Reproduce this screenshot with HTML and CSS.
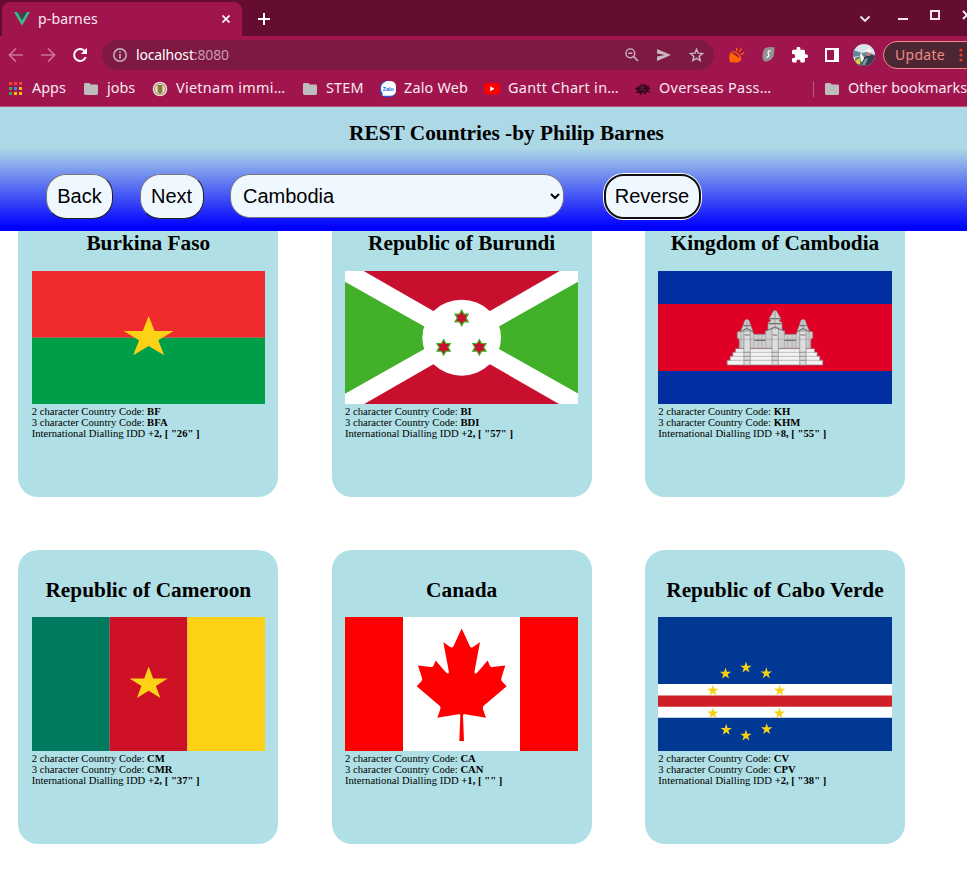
FILE: index.html
```html
<!DOCTYPE html>
<html lang="en">
<head>
<meta charset="utf-8">
<title>p-barnes</title>
<link rel="stylesheet" href="styles.css">
</head>
<body>
<svg class="defs" width="0" height="0" aria-hidden="true">
  <defs>
    <symbol id="folder" viewBox="0 0 14 12"><path fill="#bdbdbd" d="M1.4 0H5.3L6.8 1.5H12.6Q14 1.5 14 2.9V10.6Q14 12 12.6 12H1.4Q0 12 0 10.6V1.4Q0 0 1.4 0Z"/></symbol>
    <polygon id="star" points="0,-1 .2245,-.309 .951,-.309 .363,.118 .588,.809 0,.382 -.588,.809 -.363,.118 -.951,-.309 -.2245,-.309"/>
    <polygon id="hexstar" points="0,-1 .289,-.5 .866,-.5 .577,0 .866,.5 .289,.5 0,1 -.289,.5 -.866,.5 -.577,0 -.866,-.5 -.289,-.5"/>
  </defs>
</svg>

<div class="browser">
  <div class="tabstrip">
    <div class="tab">
      <svg width="16" height="14" viewBox="0 0 16 14"><path fill="#41b883" d="M0 0H3.2L8 8.3 12.8 0H16L8 13.8Z"/><path fill="#35495e" d="M3.2 0H6.1L8 3.3 9.9 0H12.8L8 8.3Z"/></svg>
      <span class="tab-title">p-barnes</span>
      <svg class="tab-close" width="8" height="8" viewBox="0 0 8 8"><path d="M.5 .5 7.5 7.5M7.500 .5 .5 7.500" stroke="#fff" stroke-width="1.600"/></svg>
    </div>
    <svg class="newtab" width="12" height="12" viewBox="0 0 12 12"><path d="M6 0V12M0 6H12" stroke="#fff" stroke-width="2"/></svg>
    <div class="window-controls">
      <svg width="12" height="8" viewBox="0 0 12 8"><path d="M1.5 1.5 6 6 10.5 1.5" fill="none" stroke="#f3e8ed" stroke-width="1.8"/></svg>
      <svg class="minimize" width="10" height="2"><path fill="#f3e8ed" d="M0 0H10V2H0Z"/></svg>
      <svg class="maximize" width="10" height="10"><rect x="1" y="1" width="8" height="8" fill="none" stroke="#f3e8ed" stroke-width="2"/></svg>
      <svg class="close" width="10" height="10"><path d="M1 1 9 9M9 1 1 9" stroke="#f3e8ed" stroke-width="2"/></svg>
    </div>
  </div>

  <div class="toolbar">
    <svg class="nav" width="16" height="16" viewBox="0 0 16 16"><path d="M15 8H2M8 1.5 1.5 8 8 14.5" fill="none" stroke="#cc7396" stroke-width="1.7"/></svg>
    <svg class="nav" width="16" height="16" viewBox="0 0 16 16"><path d="M1 8H14M8 1.5 14.5 8 8 14.5" fill="none" stroke="#cc7396" stroke-width="1.7"/></svg>
    <svg class="nav" width="16" height="16" viewBox="0 0 16 16"><path d="M13.7 10.2A6 6 0 1 1 12.4 3.8" fill="none" stroke="#fff" stroke-width="2"/><path fill="#fff" d="M15 0.8V7H8.8Z"/></svg>
    <div class="omnibox">
      <svg width="14" height="14" viewBox="0 0 14 14"><circle cx="7" cy="7" r="6.2" fill="none" stroke="#c5b3bc" stroke-width="1.5"/><path fill="#c5b3bc" d="M6.2 3.2H7.8V4.8H6.2ZM6.2 6H7.8V10.8H6.2Z"/></svg>
      <span class="url"><span class="host">localhost</span>:8080</span>
      <span class="omni-icons">
        <svg width="14" height="14" viewBox="0 0 14 14"><circle cx="5.3" cy="5.3" r="4.4" fill="none" stroke="#c8b7bf" stroke-width="1.4"/><path d="M3.2 5.3H7.4M8.6 8.6 13 13" stroke="#c8b7bf" stroke-width="1.5"/></svg>
        <svg width="14" height="12" viewBox="0 0 14 12"><path fill="#c8b7bf" d="M0 0 14 6 0 12V7.4L8 6 0 4.6Z"/></svg>
        <svg width="15" height="14" viewBox="0 0 15 14"><path fill="none" stroke="#c8b7bf" stroke-width="1.4" d="M7.5 1.3 9.1 5.1 13.6 5.5 10.2 8.4 11.2 12.5 7.5 10.3 3.8 12.5 4.8 8.4 1.4 5.5 5.9 5.1Z"/></svg>
      </span>
    </div>
    <svg class="ext-lamp" width="16" height="16" viewBox="0 0 16 16"><path fill="#ff6500" d="M1.700 5.200 12.300 12.300C11 15.500 8 16 5 15.200H1Q0 12.500 .3 9.500 .5 6.800 1.700 5.200Z"/><path d="M3 5Q6 4.500 8.500 6.500T11.700 12M7.700 4.200V.8M10.200 5.200 12.400 1.500M11.800 7.600 15.300 5.500" fill="none" stroke="#ff6500" stroke-width="1.300"/></svg>
    <svg class="ext-shield" width="13" height="15" viewBox="0 0 13 15"><path fill="#929292" d="M2.500 1.500Q7-.5 12.500 .4 12.500 5 11.600 9 10.500 13 4 14.800 0 14 .5 9Q.8 4 2.500 1.500Z"/><path d="M8.600 4Q5.700 3.500 6.100 6 8.200 9.800 4.300 10.500" fill="none" stroke="#fff" stroke-width="1.300"/></svg>
    <svg class="ext-puzzle" width="16" height="16" viewBox="2 1.500 21 21"><path fill="#fff" d="M20.500 11H19V7c0-1.100-.9-2-2-2h-4V3.500a2.500 2.500 0 0 0-5 0V5H4c-1.100 0-2 .9-2 2v3.800h1.500a2.700 2.700 0 0 1 0 5.400H2V20c0 1.100.9 2 2 2h3.800v-1.500a2.700 2.700 0 0 1 5.400 0V22H17c1.100 0 2-.9 2-2v-4h1.500a2.500 2.500 0 0 0 0-5z"/></svg>
    <svg class="ext-panel" width="14" height="14"><path fill="#fff" fill-rule="evenodd" d="M0 0H14V14H0ZM2 2V12H9V2Z"/></svg>
    <svg class="avatar" width="22" height="22" viewBox="0 0 22 22">
      <defs><clipPath id="face"><circle cx="11" cy="11" r="11"/></clipPath></defs>
      <g clip-path="url(#face)"><path fill="#d9e5ec" d="M0 0H22V22H0Z"/><path fill="#66869a" d="M0 6 9 9 14 8 22 11V14L7 12 0 13Z"/><path fill="#537b54" d="M2 14 8 12 10 22H3Z"/><path fill="#d8cf47" d="M3 16 7 14 7 20 3 20Z"/><path fill="#39404d" d="M11 13 17 10 22 12V22H8Z"/><circle cx="15.500" cy="9.500" r="2.500" fill="#bb8679"/><path fill="#f5f7f8" d="M12 7 16 4 19 7 17 9ZM8 8 11 15 8 18 7 12Z"/><path fill="#8099bb" d="M12 15 15 14 12 21H9Z"/></g>
    </svg>
    <div class="update"><span>Update</span>
      <svg width="4" height="14"><circle cx="2" cy="2" r="1.600" fill="#e33e25"/><circle cx="2" cy="7" r="1.600" fill="#e33e25"/><circle cx="2" cy="12" r="1.600" fill="#e33e25"/></svg>
    </div>
  </div>

  <div class="bookmarks">
    <div class="bm apps"><svg width="13" height="14" viewBox="0 0 13 14"><path fill="#f44336" d="M0 0H3V3H0ZM5 0H8V3H5ZM10 0H13V3H10Z"/><path fill="#34a853" d="M0 5H3V8H0ZM0 10H3V13H0Z"/><path fill="#2196f3" d="M5 5H8V8H5Z"/><path fill="#fbbc04" d="M10 5H13V8H10ZM5 10H8V13H5ZM10 10H13V13H10Z"/></svg><span>Apps</span></div>
    <div class="bm jobs"><svg width="14" height="12"><use href="#folder"/></svg><span>jobs</span></div>
    <div class="bm vietnam"><svg width="16" height="16" viewBox="0 0 16 16"><circle cx="8" cy="8" r="7.300" fill="#eee5cf"/><circle cx="8" cy="8" r="5.500" fill="none" stroke="#a08f7b" stroke-width="1.200"/><path fill="#9b7735" d="M5.500 4H10.500V11L8 13 5.500 11Z"/><path fill="#548b50" d="M7.300 4H8.700V12H7.300Z"/></svg><span>Vietnam immi…</span></div>
    <div class="bm stem"><svg width="14" height="12"><use href="#folder"/></svg><span>STEM</span></div>
    <div class="bm zalo"><svg width="16" height="16" viewBox="0 0 16 16"><rect width="16" height="16" rx="6.500" fill="#0868ed"/><path fill="#fff" d="M7 0H10Q16 0 16 6V9Q16 14.800 10 14.800H6L2.500 14.700 2.700 12.500Q1 11 1 7 1 2 7 0Z"/><text x="8.300" y="9.800" text-anchor="middle">Zalo</text></svg><span>Zalo Web</span></div>
    <div class="bm gantt"><svg width="16" height="12" viewBox="0 0 16 12"><rect width="16" height="11.500" rx="3" fill="#f00"/><path fill="#fff" d="M6.200 3.300 10.500 5.800 6.200 8.200Z"/></svg><span>Gantt Chart in…</span></div>
    <div class="bm overseas"><svg width="16" height="12" viewBox="0 0 16 12"><path fill="#39051b" d="M0 6 3 3 4 5 5 1 7 3 8 0 9 2 11 1 12 4 13 2 15 6 13 8 16 10 12 9 10 12 8 9 6 12 4 10 0 10 3 8Z"/><path d="M5 4H10M4 7 7 6 11 8" stroke="#76324d" stroke-width=".8" fill="none"/></svg><span>Overseas Pass…</span></div>
    <div class="bm other"><svg width="14" height="12"><use href="#folder"/></svg><span>Other bookmarks</span></div>
  </div>
</div>

<header class="site-header">
  <h1>REST Countries -by Philip Barnes</h1>
  <div class="controls">
    <button class="back">Back</button>
    <button class="next">Next</button>
    <select><option>Cambodia</option></select>
    <button class="reverse">Reverse</button>
  </div>
</header>

<main>
  <div class="cards">
    <article class="card">
      <h2>Burkina Faso</h2>
      <svg class="flag" viewBox="0 0 700 400" preserveAspectRatio="none"><path fill="#ef2b2d" d="M0 0H700V200H0Z"/><path fill="#009e49" d="M0 200H700V400H0Z"/><use href="#star" fill="#fcd116" transform="translate(350 200) scale(79 65)"/></svg>
      <p>2 character Country Code: <b>BF</b><br>3 character Country Code: <b>BFA</b><br>International Dialling IDD <b>+2, [ "26" ]</b></p>
    </article>
    <article class="card">
      <h2>Republic of Burundi</h2>
      <svg class="flag" viewBox="0 0 700 400" preserveAspectRatio="none"><path fill="#fff" d="M0 0H700V400H0Z"/><path fill="#c8102e" d="M56 0H644L350 169ZM56 400H644L350 231Z"/><path fill="#43b02a" d="M0 32 298 200 0 368ZM700 32 402 200 700 368Z"/><ellipse cx="350" cy="200" rx="118" ry="114" fill="#fff"/><g fill="#c8102e" stroke="#43b02a" stroke-width=".16"><use href="#hexstar" transform="translate(350 141) scale(23)"/><use href="#hexstar" transform="translate(296 229) scale(23)"/><use href="#hexstar" transform="translate(403 229) scale(23)"/></g></svg>
      <p>2 character Country Code: <b>BI</b><br>3 character Country Code: <b>BDI</b><br>International Dialling IDD <b>+2, [ "57" ]</b></p>
    </article>
    <article class="card">
      <h2>Kingdom of Cambodia</h2>
      <svg class="flag" viewBox="0 0 700 400" preserveAspectRatio="none"><path fill="#032ea1" d="M0 0H700V400H0Z"/><path fill="#e00025" d="M0 99H700V300H0Z"/>
        <g stroke="#858585" stroke-width="2">
          <path fill="#cecece" d="M243 232V205L237 201V183L247 181 256 160 259 149 266 144 273 149 276 160 284 181 286 190H322L321 180 329 176V155L338 149 332 143 340 130 345 120 350 118 355 120 360 130 368 143 362 149 371 155V176L379 180 378 190H414L416 181 424 160 427 149 434 144 441 149 444 160 453 181 463 183V201L457 205V232Z"/>
          <path fill="#f3f3f3" d="M232 233H468V244H476V256H484V268H493V282H207V268H216V256H224V244H232Z"/>
          <path fill="#dedede" d="M257 180H276V282H257ZM341 170H360V282H341ZM424 180H443V282H424Z"/>
          <path fill="none" stroke="#a0a0a0" d="M224 244H476M216 256H484M207 268H493M247 205H455M287 190V232M300 190V232M311 190V232M388 190V232M401 190V232M412 190V232M248 183V232M452 183V232M322 180V232M378 180V232"/>
          <path fill="none" stroke="#707070" stroke-width="3.500" d="M333 143H367M330 158H370M322 180 350 169 378 180M247 182 266 172 285 182M416 182 434 172 453 182M256 164H276M424 164H444M288 208H322M378 208H412M259 192H274M426 192H441M343 192H357"/>
          <path fill="none" stroke="#888" d="M257 244H276M257 256H276M257 268H276M341 244H360M341 256H360M341 268H360M424 244H443M424 256H443M424 268H443M350 120V178M266 150V180M434 150V180"/>
        </g></svg>
      <p>2 character Country Code: <b>KH</b><br>3 character Country Code: <b>KHM</b><br>International Dialling IDD <b>+8, [ "55" ]</b></p>
    </article>
    <article class="card">
      <h2>Republic of Cameroon</h2>
      <svg class="flag" viewBox="0 0 700 400" preserveAspectRatio="none"><path fill="#007a5e" d="M0 0H233V400H0Z"/><path fill="#ce1126" d="M233 0H466V400H233Z"/><path fill="#fcd116" d="M466 0H700V400H466Z"/><use href="#star" fill="#fcd116" transform="translate(350 200) scale(60 52)"/></svg>
      <p>2 character Country Code: <b>CM</b><br>3 character Country Code: <b>CMR</b><br>International Dialling IDD <b>+2, [ "37" ]</b></p>
    </article>
    <article class="card">
      <h2>Canada</h2>
      <svg class="flag" viewBox="0 0 700 400" preserveAspectRatio="none"><path fill="#f00" d="M0 0H174V400H0ZM525 0H700V400H525Z"/><path fill="#fff" d="M174 0H525V400H174Z"/><path fill="#f00" d="M350 34 325 88Q322 93 317 90L295 75 311 160Q313 175 303 166L272 130 265 146Q263 150 258 149L219 145 231 182Q233 190 228 193L215 207 283 264Q288 268 286 275L277 301 340 290Q346 289 346 295L343 370H357L354 295Q354 289 360 290L423 301 414 275Q412 268 417 264L485 207 472 193Q467 190 469 182L481 145 442 149Q437 150 435 146L428 130 397 166Q387 175 389 160L405 75 383 90Q378 93 375 88Z"/></svg>
      <p>2 character Country Code: <b>CA</b><br>3 character Country Code: <b>CAN</b><br>International Dialling IDD <b>+1, [ "" ]</b></p>
    </article>
    <article class="card">
      <h2>Republic of Cabo Verde</h2>
      <svg class="flag" viewBox="0 0 700 400" preserveAspectRatio="none"><path fill="#003893" d="M0 0H700V400H0Z"/><path fill="#fff" d="M0 200H700V301H0Z"/><path fill="#cf2027" d="M0 234H700V268H0Z"/><g fill="#f7d116"><use href="#star" transform="translate(263 151) scale(18)"/><use href="#star" transform="translate(202 169) scale(18)"/><use href="#star" transform="translate(324 168) scale(18)"/><use href="#star" transform="translate(164 220) scale(18)"/><use href="#star" transform="translate(364 220) scale(18)"/><use href="#star" transform="translate(164 288) scale(18)"/><use href="#star" transform="translate(363 288) scale(18)"/><use href="#star" transform="translate(204 337) scale(18)"/><use href="#star" transform="translate(325 335) scale(18)"/><use href="#star" transform="translate(263 354) scale(18)"/></g></svg>
      <p>2 character Country Code: <b>CV</b><br>3 character Country Code: <b>CPV</b><br>International Dialling IDD <b>+2, [ "38" ]</b></p>
    </article>
  </div>
</main>
</body>
</html>
```
FILE: styles.css
```css
* { box-sizing: border-box; }
body {
  margin: 0;
  width: 967px;
  height: 881px;
  overflow: hidden;
  display: flex;
  flex-direction: column;
  background: #fff;
  color: #000;
  font-family: "Liberation Serif", serif;
}
svg { display: block; flex: none; }
.defs { position: absolute; }

.browser {
  flex: none;
  height: 107px;
  background: #a1154e;
  border-bottom: 1px solid #bb5580;
  color: #f8eaf0;
  font-family: "Noto Sans", sans-serif;
  font-size: 14px;
  white-space: nowrap;
  overflow: hidden;
}
.tabstrip {
  height: 36px;
  display: flex;
  background: #640d31;
}
.tab {
  flex: none;
  width: 240px;
  margin: 2px 0 0 2px;
  padding: 0 12px;
  display: flex;
  align-items: center;
  background: #a1154e;
  border-radius: 8px 8px 0 0;
}
.tab-title { margin: -2px 0 0 8px; letter-spacing: .15px; }
.tab-close { margin-left: auto; }
.newtab { margin: 13px 0 0 16px; }
.window-controls {
  flex: none;
  display: flex;
  margin-left: 589px;
  padding-top: 15px;
}
.minimize { margin: 3px 0 0 27px; }
.maximize { margin: -5px 0 0 22px; }
.close { margin: -5px 0 0 22px; }

.toolbar {
  height: 37px;
  display: flex;
  align-items: center;
  padding-left: 8px;
}
.nav { margin-right: 16px; }
.omnibox {
  flex: none;
  width: 612px;
  height: 30px;
  margin-left: -2px;
  padding: 0 10px 0 11px;
  display: flex;
  align-items: center;
  border-radius: 15px;
  background: #7e1943;
}
.url { margin-left: 9px; color: #c69caf; letter-spacing: -.15px; }
.host { color: #fff; }
.omni-icons { margin-left: auto; display: flex; align-items: center; gap: 18px; }
.ext-lamp { margin-left: 15px; }
.ext-shield { margin-left: 17px; }
.ext-puzzle { margin-left: 17px; }
.ext-panel { margin-left: 17px; }
.avatar { margin-left: 14px; }
.update {
  flex: none;
  width: 100px;
  height: 28px;
  margin-left: 8px;
  padding-left: 11px;
  display: flex;
  align-items: center;
  gap: 14px;
  border: 1px solid #f28b82;
  border-radius: 14px;
  background: #4c2733;
  color: #ee8b82;
}
.update span { letter-spacing: .3px; }

.bookmarks {
  height: 31px;
  display: grid;
  grid-template-columns: 75px 69px 150px 78px 103px 151px 178px 170px;
  padding-left: 9px;
  font-size: 14.400px;
  letter-spacing: .300px;
}
.bm { display: flex; align-items: center; }
.bm span { margin: -2px 0 0 8px; }
.apps span { margin-left: 10px; letter-spacing: 0; }
.jobs span { margin-left: 9px; letter-spacing: 0; }
.vietnam { margin-left: -1px; }
.stem span { margin-left: 9px; letter-spacing: .2px; }
.zalo { margin-left: -1px; }
.zalo span { letter-spacing: .2px; }
.zalo text { font: bold 5.500px "Liberation Sans", sans-serif; letter-spacing: 0; fill: #0868ed; }
.other::before { content: ""; width: 1px; height: 16px; margin-right: 11px; background: #bd5680; }
.bm.other span { margin-left: 9px; letter-spacing: 0; }

.site-header {
  flex: none;
  height: 124px;
  background: linear-gradient(#add8e6 33%, #00f 97%);
}
h1 {
  margin: 0;
  padding: 14px 0 0 46px;
  font-size: 21.333px;
  line-height: 24px;
  text-align: center;
}
.controls {
  display: flex;
  margin: 29px 0 0 46px;
}
.controls button, .controls select {
  height: 45px;
  margin: 0;
  border: 1px solid #767676;
  border-radius: 20px;
  background: #f0f8ff;
  color: #000;
  font: 20px "Liberation Sans", sans-serif;
}
.controls button {
  padding: 0;
  border-color: #767676 #212121 #212121 #767676;
}
.controls .back { width: 67px; }
.controls .next { width: 64px; margin-left: 27px; padding-right: 1px; }
.controls select { width: 334px; height: 44px; margin-left: 26px; padding: 0 0 0 8px; }
.controls .reverse {
  width: 97px;
  height: 45px;
  margin: 0 0 0 40px;
  padding-right: 1px;
  border: 2px solid #101010;
  box-shadow: 0 0 0 1px #fff;
}

main { flex: 1; min-height: 0; overflow: hidden; }
.cards {
  display: grid;
  grid-template-columns: repeat(3, 260px);
  gap: 52.900px 53.333px;
  margin: -27.800px 0 0 18.333px;
}
.card {
  height: 294px;
  padding: 26.667px 13.333px 0;
  border-radius: 20px;
  background: #b0e0e6;
}
h2 {
  margin: 0 0 14.900px;
  font-size: 21.333px;
  line-height: 26px;
  text-align: center;
  white-space: nowrap;
}
.flag { width: 233.333px; height: 133.333px; }
.card:nth-child(3n) .flag { width: 234px; }
.card:nth-child(n+4) .flag { height: 134px; margin-top: -15.567px; }
.card:nth-child(n+4) h2 { margin-bottom: 29.800px; }
.card p { margin: 1.800px 0 0; font-size: 10.667px; line-height: 11px; }
```
